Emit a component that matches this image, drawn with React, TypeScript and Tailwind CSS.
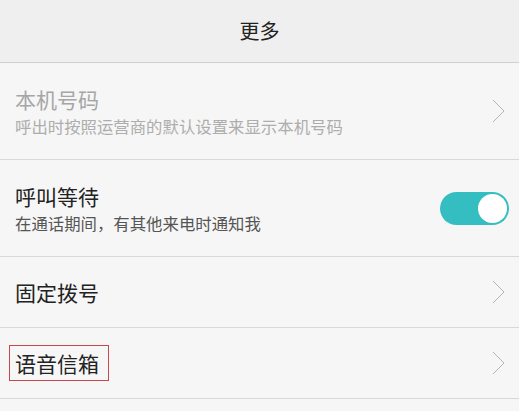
const Chevron = () => (
    <svg width="13" height="24" viewBox="0 0 13 24" className="shrink-0">
        <path d="M1 1 L12 12 L1 23" fill="none" stroke="#b4b4b4" strokeWidth="1" />
    </svg>
);

export default function App() {
    const font = { fontFamily: '"Noto Sans CJK SC", "Noto Sans", sans-serif' };

    return (
        <div className="min-h-screen bg-[#f6f6f6] text-[#222]" style={font}>
            <div className="h-[63px] bg-[#efefef] border-b border-[#d0d0d0] flex items-center justify-center">
                <span className="text-[20px] leading-none">更多</span>
            </div>

            <div className="h-[97px] border-b border-[#d8d8d8] flex items-center pl-[15px] pr-[14px]">
                <div className="flex-1 flex flex-col">
                    <span className="text-[21px] leading-[28px] text-[#a6a6a6]">本机号码</span>
                    <span className="text-[16.4px] leading-[22px] text-[#adadad] mt-[2px]">呼出时按照运营商的默认设置来显示本机号码</span>
                </div>
                <Chevron />
            </div>

            <div className="h-[97px] border-b border-[#d8d8d8] flex items-center pl-[15px] pr-[10px]">
                <div className="flex-1 flex flex-col">
                    <span className="text-[21px] leading-[28px]">呼叫等待</span>
                    <span className="text-[16.4px] leading-[22px] text-[#555] mt-[2px]">在通话期间，有其他来电时通知我</span>
                </div>
                <div className="w-[69px] h-[33px] rounded-full bg-[#35bec1] flex items-center justify-end pr-[2px]">
                    <div className="w-[29px] h-[29px] rounded-full bg-white" />
                </div>
            </div>

            <div className="h-[71px] border-b border-[#d8d8d8] flex items-center pl-[15px] pr-[14px]">
                <span className="flex-1 text-[21px] leading-[28px]">固定拨号</span>
                <Chevron />
            </div>

            <div className="h-[71px] border-b border-[#d8d8d8] flex items-center pl-[9px] pr-[14px]">
                <div className="flex-1">
                    <span className="inline-block border border-[#c9474b] pl-[5px] pr-[9px] py-[3px] text-[21px] leading-[28px]">语音信箱</span>
                </div>
                <Chevron />
            </div>
        </div>
    );
}
